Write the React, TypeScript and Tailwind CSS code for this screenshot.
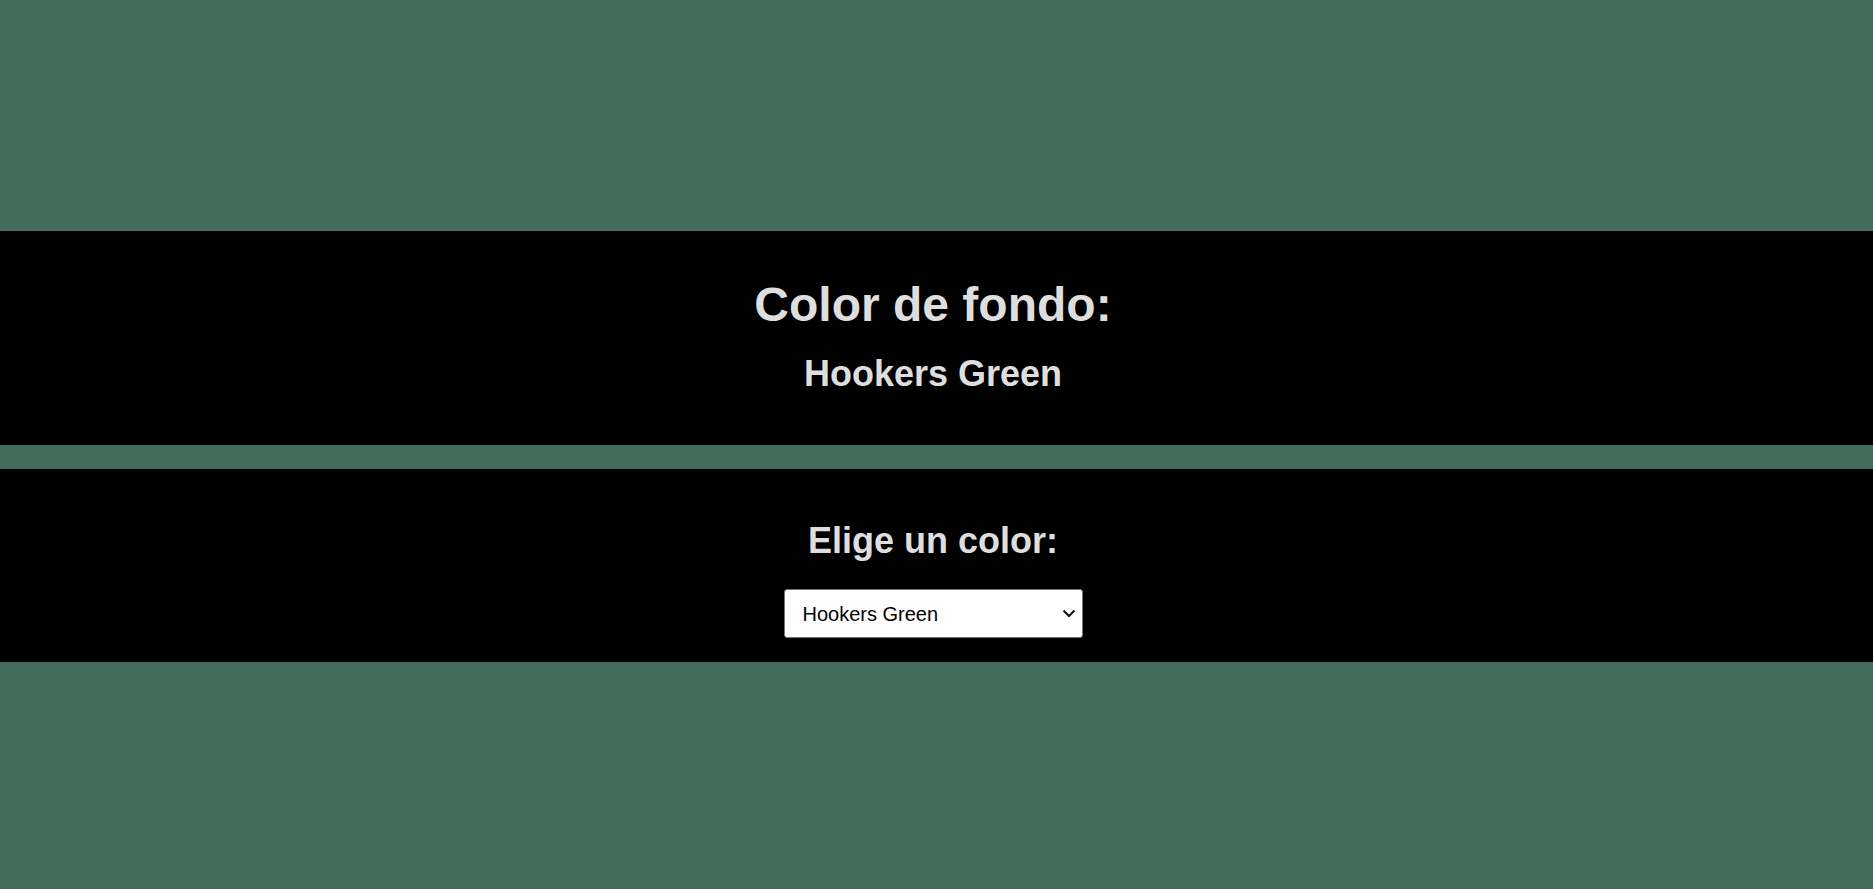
import { useState } from "react";

const colors = ["Hookers Green", "Black", "White", "Crimson", "Navy Blue"];

export default function App() {
  const [color, setColor] = useState("Hookers Green");

  return (
    <div className="flex h-[889px] w-full flex-col justify-center gap-[24px] bg-[#436c5c] pt-[4px] font-['Liberation_Sans',Arial,sans-serif] text-[#dedede]">
      <section className="flex h-[214px] flex-col items-center bg-black pr-[7px] pt-[46px]">
        <h1 className="text-[48px] font-bold leading-[55px]">Color de fondo:</h1>
        <h2 className="mt-[21px] text-[36px] font-bold leading-[41px]">{color}</h2>
      </section>
      <section className="flex h-[193px] flex-col items-center bg-black pr-[7px] pt-[51px]">
        <h2 className="text-[36px] font-bold leading-[41px]">Elige un color:</h2>
        <div className="relative mt-[28px]">
          <select
            value={color}
            onChange={(e) => setColor(e.target.value)}
            className="h-[49px] w-[299px] appearance-none rounded-[3px] border border-[#767676] bg-white pl-[18px] pt-[1px] text-[20px] text-black outline-none"
          >
            {colors.map((c) => (
              <option key={c}>{c}</option>
            ))}
          </select>
          <svg
            className="pointer-events-none absolute right-[7px] top-[20px]"
            width="14"
            height="9"
            viewBox="0 0 14 9"
            fill="none"
          >
            <path d="M1.5 1.5 7 7l5.5-5.5" stroke="#111" strokeWidth="2" />
          </svg>
        </div>
      </section>
    </div>
  );
}
